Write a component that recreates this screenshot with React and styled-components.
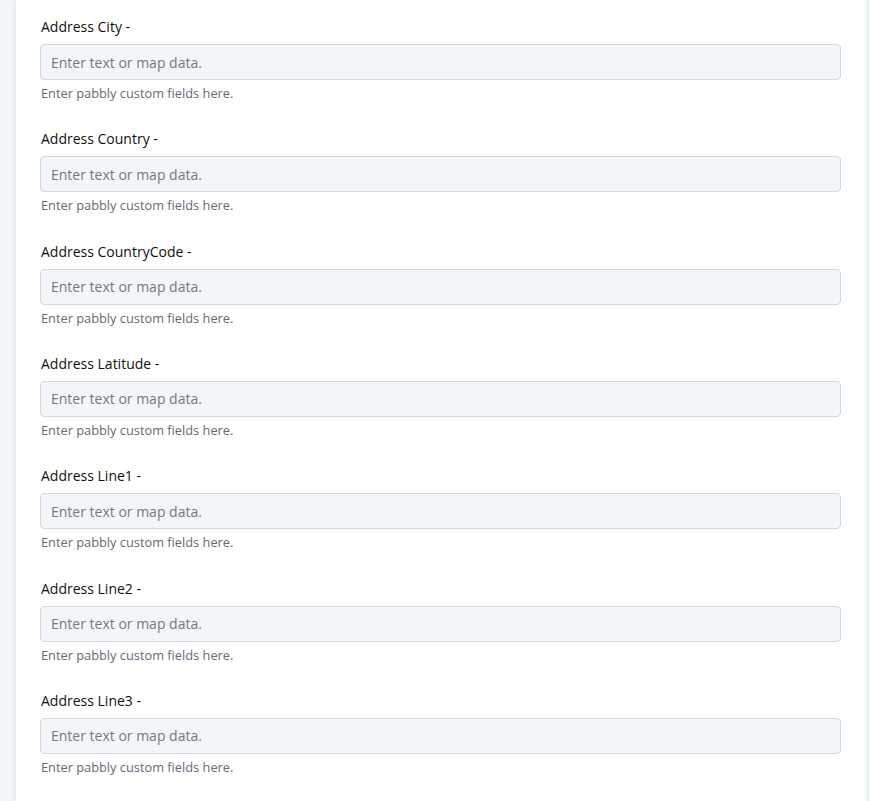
import React from "react";
import styled, { createGlobalStyle } from "styled-components";

const GlobalStyle = createGlobalStyle`
  html, body {
    margin: 0;
    padding: 0;
    background: #f3f6f9;
    font-family: "Open Sans", Lato, sans-serif;
  }
`;

const Page = styled.div`
  display: flex;
  padding-left: 16px;
  min-height: 801px;
`;

const Panel = styled.div`
  width: 852px;
  background: #fff;
  border-right: 1px solid #e3e7ec;
  box-shadow: -2px 0 3px rgba(20, 40, 70, 0.06);
  padding: 17px 26px 0 24px;
  box-sizing: border-box;
`;

const Field = styled.div`
  display: flex;
  flex-direction: column;
  height: 112.33px;
`;

const Label = styled.label`
  font-size: 14px;
  color: #111;
  line-height: 20px;
  margin-bottom: 7px;
  padding-left: 1px;
`;

const Input = styled.input`
  height: 36px;
  box-sizing: border-box;
  border: 1px solid #d3d8de;
  border-radius: 4px;
  background: #f3f6f9;
  padding: 0 10px;
  font-family: inherit;
  font-size: 14px;
  color: #333;
  outline: none;
  &::placeholder {
    color: #707a86;
  }
`;

const Help = styled.span`
  margin-top: 5px;
  padding-left: 1px;
  font-size: 12.8px;
  line-height: 16px;
  color: #5f6b78;
`;

const fields = [
  "Address City",
  "Address Country",
  "Address CountryCode",
  "Address Latitude",
  "Address Line1",
  "Address Line2",
  "Address Line3",
];

export default function App() {
  return (
    <>
      <GlobalStyle />
      <Page>
        <Panel>
          {fields.map((name) => (
            <Field key={name}>
              <Label>{name} -</Label>
              <Input type="text" placeholder="Enter text or map data." />
              <Help>Enter pabbly custom fields here.</Help>
            </Field>
          ))}
        </Panel>
      </Page>
    </>
  );
}
